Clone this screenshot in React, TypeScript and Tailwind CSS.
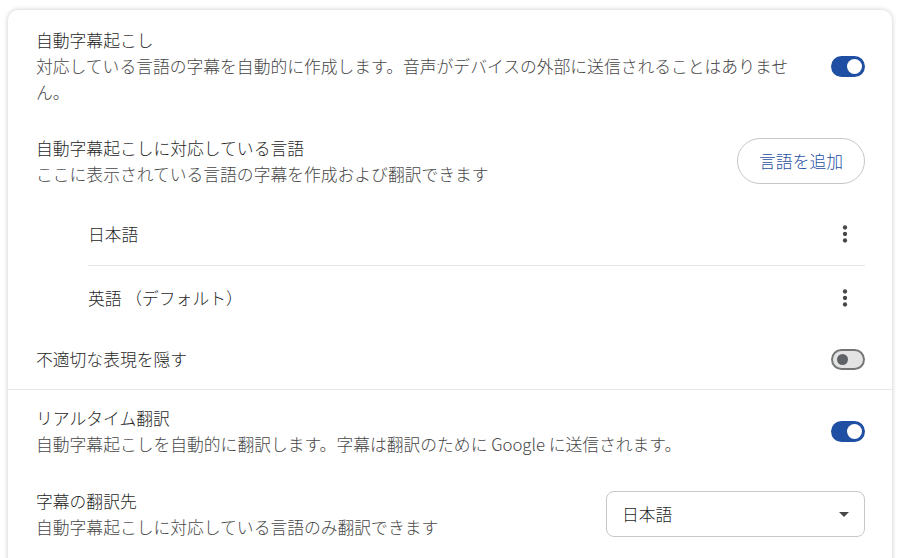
const font = "font-['Noto_Sans_CJK_JP','Noto_Sans',sans-serif]";

function Toggle({ on }: { on: boolean }) {
  if (on) {
    return (
      <div className="flex h-[21px] w-[34px] shrink-0 items-center justify-end rounded-full bg-[#1f4fa2] pr-[3px]">
        <div className="h-[15px] w-[15px] rounded-full bg-white" />
      </div>
    );
  }
  return (
    <div className="flex h-[21px] w-[34px] shrink-0 items-center rounded-full border-2 border-[#747775] bg-[#e3e3e3] pl-[4px]">
      <div className="h-[11px] w-[11px] rounded-full bg-[#5f6368]" />
    </div>
  );
}

function MoreIcon() {
  return (
    <svg width="26" height="26" viewBox="0 0 24 24" fill="#474747">
      <circle cx="12" cy="6" r="2" />
      <circle cx="12" cy="12" r="2" />
      <circle cx="12" cy="18" r="2" />
    </svg>
  );
}

function Row({
  title,
  sub,
  children,
  className = "",
}: {
  title: string;
  sub?: string;
  children?: React.ReactNode;
  className?: string;
}) {
  return (
    <div className={`flex items-center gap-[30px] pl-[28px] pr-[27px] ${className}`}>
      <div className="min-w-0 flex-1">
        <div className="text-[#1f1f1f]">{title}</div>
        {sub && <div className="text-[#474747]">{sub}</div>}
      </div>
      {children}
    </div>
  );
}

export default function App() {
  return (
    <div className={`h-screen overflow-hidden bg-white px-[8px] pt-[10px] text-[16.8px] font-light leading-[26px] ${font}`}>
      <div className="rounded-[10px] bg-white pb-[40px] shadow-[0_0_5px_rgba(0,0,0,0.22)]">
        <Row
          title="自動字幕起こし"
          sub="対応している言語の字幕を自動的に作成します。音声がデバイスの外部に送信されることはありません。"
          className="pt-[17px] pb-[15px]"
        >
          <Toggle on />
        </Row>

        <Row
          title="自動字幕起こしに対応している言語"
          sub="ここに表示されている言語の字幕を作成および翻訳できます"
          className="py-[15px]"
        >
          <button className="h-[46px] shrink-0 rounded-full border border-[#c4c7c5] px-[21px] text-[#1f4fa2]">
            言語を追加
          </button>
        </Row>

        <div className="pl-[80px] pr-[27px] text-[#1f1f1f]">
          <div className="flex h-[63px] items-center justify-between">
            <span>日本語</span>
            <div className="mr-[7px] flex">
              <MoreIcon />
            </div>
          </div>
          <div className="flex h-[64px] items-center justify-between border-t border-[#e5e5e5]">
            <span>英語 （デフォルト）</span>
            <div className="mr-[7px] flex">
              <MoreIcon />
            </div>
          </div>
        </div>

        <Row title="不適切な表現を隠す" className="h-[61px] border-b border-[#e8e8e8]">
          <Toggle on={false} />
        </Row>

        <Row
          title="リアルタイム翻訳"
          sub="自動字幕起こしを自動的に翻訳します。字幕は翻訳のために Google に送信されます。"
          className="pt-[15px] pb-[16px]"
        >
          <Toggle on />
        </Row>

        <Row
          title="字幕の翻訳先"
          sub="自動字幕起こしに対応している言語のみ翻訳できます"
          className="py-[15px]"
        >
          <div className="flex h-[46px] w-[259px] shrink-0 items-center justify-between rounded-[8px] border border-[#c7c7c7] pl-[15px] pr-[15px] text-[#1f1f1f]">
            <span>日本語</span>
            <svg width="10" height="5" viewBox="0 0 10 5" fill="#474747">
              <path d="M0 0h10L5 5z" />
            </svg>
          </div>
        </Row>
      </div>
    </div>
  );
}
